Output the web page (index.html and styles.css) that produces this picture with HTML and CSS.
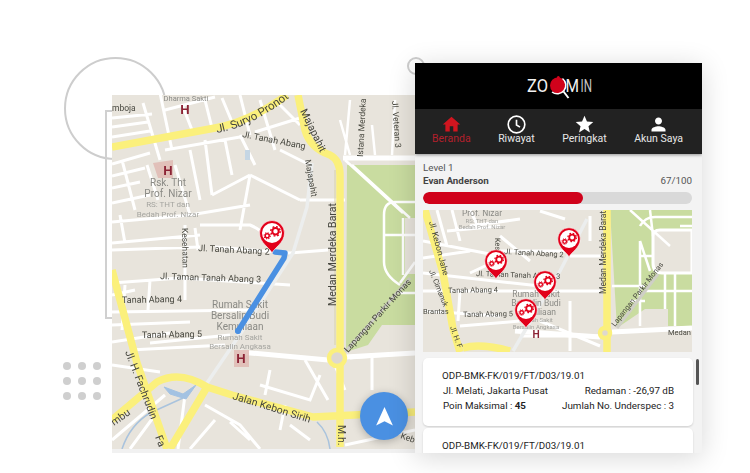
FILE: index.html
```html
<!DOCTYPE html>
<html lang="id">
<head>
<meta charset="utf-8">
<title>Zoomin</title>
<link rel="stylesheet" href="styles.css">
</head>
<body>
<div class="stage">
  <div class="deco-ring"></div>
  <div class="deco-frame"></div>
  <div class="deco-knob"></div>
  <div class="deco-dots"><i></i><i></i><i></i><i></i><i></i><i></i><i></i><i></i><i></i></div>

  <svg width="0" height="0" class="defs">
    <defs>
      <g id="pin">
        <path fill="#e2001a" stroke="#fff" stroke-width=".6" d="M0 20C-2 15-12.500 10-12.500 0A12.500 12.500 0 1 1 12.500 0C12.500 10 2 15 0 20Z"/>
        <circle r="10" fill="#fff"/>
        <circle cx="3.500" cy="-1.700" r="3.200" fill="none" stroke="#e2001a" stroke-width="2"/>
        <circle cx="3.500" cy="-1.700" r="4.700" fill="none" stroke="#e2001a" stroke-width="1.400" stroke-dasharray="1.850 1.840"/>
        <circle cx="-4.800" cy="2.800" r="2" fill="none" stroke="#e2001a" stroke-width="1.500"/>
        <circle cx="-4.800" cy="2.800" r="3.100" fill="none" stroke="#e2001a" stroke-width="1.100" stroke-dasharray="1.220 1.210"/>
      </g>
      <path id="suryo" d="M217 133Q252 127 290 97"/>
    </defs>
  </svg>

  <section class="map-wrap">
    <svg class="map-big" viewBox="112 95 303 354" width="303" height="354">
      <rect class="land" x="112" y="95" width="303" height="354"/>
      <path class="park" d="M347 165H415V325H382L368 345 346 352Z"/>
      <rect class="land" x="405" y="218" width="10" height="56"/>
      <rect class="land" x="405" y="325" width="10" height="30"/>
      <path class="street" d="M112 118L152 114M112 127L148 122M112 137L150 131M160 93L172 150M143 103L160 160M183 107L192 130M165 110L215 97M112 164L150 153M165 150L240 137M112 176L145 168M112 188L140 182M112 203L150 195M122 160L135 210M147 165L158 200M175 165L190 215M190 150L200 200M205 140L212 195M225 140L232 175M212 195L250 175M250 175L300 200M240 135L255 165M112 222L190 215M190 215L250 205M112 243L200 235M112 250L200 247M195 228L198 250M215 247L290 253M112 283L180 278M180 278L290 285M125 285L122 330M150 280L148 310M112 312L250 310M112 342L170 333M130 350L225 345M150 343L230 335M240 95L250 135M260 100L275 150M275 100L300 125M255 132L300 118M280 150L310 165M250 175L240 230M300 200L345 200M290 253L328 250M112 365L160 372M112 440L165 395M130 449L155 415M185 395L178 449M205 405L240 425L260 449M190 449L215 420M230 422L250 440M260 385L310 400L320 375M270 370L265 395M305 360L328 400M285 405L280 430M290 425L310 440M345 445L415 430M350 358L415 353M330 353L345 390M372 358L372 390M205 100L212 128M222 98L232 122M120 215L125 243M112 325L190 322M112 295L135 290M185 225V300M200 225H250Q262 230 270 240"/>
      <path class="street wide" d="M343 158H415M240 352L328 360M345 357L415 353"/>
      <path class="street thin" d="M350 100L345 155M372 125L375 155M395 100L392 155M340 120L350 155M352 165L410 218M345 160L403 213M384 215V262Q384 275 400 285M415 202H395Q384 202 384 215M384 235L415 235M403 218V275M400 293H415M400 283L415 262"/>
      <path class="alley" d="M207 383L243 330L293 253L307 207L312 163"/>
      <path class="alley2" d="M345 352L410 278"/>
      <path class="water" d="M183 398L150 413Q130 425 122 449M317 422Q328 432 330 449"/>
      <path class="water-blob" d="M164 387L183 394L196 385L186 399L170 394Z"/>
      <rect class="pond" x="245" y="150" width="5" height="10"/>
      <path class="block" d="M153 163L173 160V178H158Z"/>
      <rect class="block" x="234" y="350" width="15" height="17"/>
      <path class="major" d="M112 147L215 128Q250 122 287 95M298 95L305 130Q310 148 330 155Q340 160 340 175V447M112 270L137 363L167 449M170 449L207 387M112 420L157 382Q180 370 207 387L232 395L313 417L415 412"/>
      <circle class="round" cx="337" cy="358" r="8"/>
      <path class="majorline" d="M335 170V345"/>
      <text class="t t11"><textPath href="#suryo">Jl. Suryo Pronoto</textPath></text>
      <text class="t t10" transform="translate(300 111) rotate(64)">Majapahit</text>
      <text class="t t8" transform="translate(305 160) rotate(80)">Majapahit</text>
      <text class="t t9" transform="translate(242 137) rotate(11)">Jl. Tanah Abang</text>
      <text class="t t8" transform="translate(363 157) rotate(-87)">Istana Merdeka</text>
      <text class="t t8" transform="translate(392 101) rotate(86)">Jl. Veteran 3</text>
      <text class="t t10" transform="translate(336 306) rotate(-90)">Medan Merdeka Barat</text>
      <text class="t t8" transform="translate(182 228) rotate(89)">Kesehatan</text>
      <text class="t t8" x="112" y="111">mboja</text>
      <text class="t t85" transform="translate(198 251) rotate(3)">Jl. Tanah Abang 2</text>
      <text class="t t85" transform="translate(160 279) rotate(2)">Jl. Taman Tanah Abang 3</text>
      <text class="t t85" transform="translate(122 303) rotate(-1)">Tanah Abang 4</text>
      <text class="t t85" transform="translate(142 338) rotate(-1)">Tanah Abang 5</text>
      <text class="t t10" transform="translate(232 399) rotate(17)">Jalan Kebon Sirih</text>
      <text class="t t10" transform="translate(125 352) rotate(69)">Jl. H. Fachrudin</text>
      <text class="t t10" transform="translate(155 437) rotate(68)">Fa</text>
      <text class="t t10" transform="translate(114 426) rotate(-35)">mbu</text>
      <text class="t t85" transform="translate(348 353) rotate(-48)">Lapangan Parkir Monas</text>
      <text class="t t10" transform="translate(338 425) rotate(90)">M.h.</text>
      <text class="t t8" transform="translate(400 438) rotate(20)">Keb</text>
      <text class="g g75 mid" x="186" y="101">Dharma Sakti</text>
      <text class="h" x="185" y="114">H</text>
      <text class="h" x="168" y="175">H</text>
      <text class="h" x="241" y="363">H</text>
      <text class="g g9 mid" x="168" y="186">Rsk. Tht</text>
      <text class="g g9 mid" x="168" y="197">Prof. Nizar</text>
      <text class="g g7 mid" x="168" y="207">RS: THT dan</text>
      <text class="g g7 mid" x="168" y="217">Bedah Prof. Nizar</text>
      <text class="g g9 mid" x="240" y="308">Rumah Sakit</text>
      <text class="g g9 mid" x="240" y="319">Bersalin Budi</text>
      <text class="g g9 mid" x="240" y="330">Kemuliaan</text>
      <text class="g g7 mid" x="240" y="340">Rumah Sakit</text>
      <text class="g g7 mid" x="240" y="349">Bersalin Angkasa</text>
      <path class="route" d="M238 331L284 258L285 253L275 252"/>
      <circle class="route-dot" cx="238" cy="331" r="3"/>
      <use href="#pin" x="272" y="233"/>
    </svg>
    <button class="fab" type="button" aria-label="Navigasi">
      <svg viewBox="0 0 20 20" width="21" height="21"><path d="M10 1L18 18.500L10 14.500L2 18.500Z" fill="#fff"/></svg>
    </button>
  </section>

  <aside class="panel">
    <header class="brand">
      <svg class="logo" viewBox="0 0 66 24" width="66" height="24">
        <text x="1" y="16" textLength="21" lengthAdjust="spacingAndGlyphs">ZO</text>
        <circle cx="32" cy="9.500" r="8" fill="#d0021b"/>
        <path d="M31 2.500Q30 0 33 0Q35 2 34 5Z" fill="#d0021b"/>
        <path d="M36.500 2.500A8.500 8.500 0 0 1 26 16" fill="none" stroke="#fff" stroke-width="1.500"/>
        <path d="M37.500 15.500L42.500 22" stroke="#fff" stroke-width="2"/>
        <text x="39.500" y="16" textLength="13.500" lengthAdjust="spacingAndGlyphs">M</text>
        <text class="logo-dim" x="54.500" y="16" textLength="11.500" lengthAdjust="spacingAndGlyphs">IN</text>
      </svg>
    </header>
    <nav class="tabs">
      <a class="tab active"><svg viewBox="0 0 24 24" width="21" height="21"><path d="M10 20v-6h4v6h5v-8h3L12 3 2 12h3v8z"/></svg><span>Beranda</span></a>
      <a class="tab"><svg viewBox="0 0 24 24" width="21" height="21"><circle cx="12" cy="12" r="9.500" class="clock"/><path d="M12 6.500V12.500L16 15" class="clock"/></svg><span>Riwayat</span></a>
      <a class="tab"><svg viewBox="0 0 24 24" width="21" height="21"><path d="M12 17.270L18.180 21l-1.640-7.030L22 9.240l-7.190-.61L12 2 9.190 8.630 2 9.240l5.460 4.730L5.820 21z"/></svg><span>Peringkat</span></a>
      <a class="tab"><svg viewBox="0 0 24 24" width="21" height="21"><path d="M12 12c2.210 0 4-1.790 4-4s-1.790-4-4-4-4 1.790-4 4 1.790 4 4 4zm0 2c-2.670 0-8 1.340-8 4v2h16v-2c0-2.660-5.330-4-8-4z"/></svg><span>Akun Saya</span></a>
    </nav>
    <div class="content">
      <div class="level">Level 1</div>
      <div class="who"><b>Evan Anderson</b><span>67/100</span></div>
      <div class="bar"><div class="fill" style="width:59.500%"></div></div>

      <svg class="map-small" viewBox="423 209 269 142" width="269" height="142">
        <rect class="land" x="423" y="209" width="269" height="142"/>
        <path class="park" d="M610 209H692V325H668V308H645L617 327Z"/>
        <path class="landf" d="M653 235Q653 229 660 229H692V272H662Q653 272 653 262Z"/>
        <path class="street" d="M437 209L447 245M452 209L460 240M470 209L478 225M470 225L520 218M447 230L500 225M423 240L500 255M423 257L470 250M500 235L530 260M500 250H570M423 272L540 285M470 272L500 258M423 290L600 290M460 290L458 320M425 310L500 315M460 325L520 320M540 320L600 345M520 335L600 335M600 255H570M540 210L565 218M570 300V350M590 215V240"/>
        <path class="street wide" d="M515 330L600 336M612 331L692 327"/>
        <path class="street thin" d="M630 209L670 245M650 209L653 235M640 240V325M650 270L640 240M640 225Q645 216 655 216H692M692 225H680M640 255H653M612 285L645 285M665 272V308M675 272V325M645 290H692M630 300L645 300"/>
        <path class="alley" d="M513 350L560 270L587 218"/>
        <path class="alley2" d="M617 327L658 273"/>
        <path class="major" d="M425 209L443 272L453 328L460 351M463 347Q480 342 510 350M607 209V351"/>
        <circle class="round" cx="605" cy="332" r="5"/>
        <text class="t t8" transform="translate(429 221) rotate(75)">Jl. Kebon Jahe</text>
        <text class="t t7" transform="translate(504 253) rotate(3)">Jl. Tanah Abang 2</text>
        <text class="t t7" transform="translate(476 275) rotate(2)">Jl. Taman Tanah Abang 3</text>
        <text class="t t7" transform="translate(448 292) rotate(-1)">Tanah Abang 4</text>
        <text class="t t7" transform="translate(463 316) rotate(-1)">Tanah Abang 5</text>
        <text class="t t7" x="423" y="313">Brantas</text>
        <text class="t t7" transform="translate(429 270) rotate(68)">Jl. Cimanuk</text>
        <text class="t t7" transform="translate(450 326) rotate(70)">Jl. H. F</text>
        <text class="t t7" transform="translate(495 237) rotate(88)">Kesehatan</text>
        <text class="t t8" transform="translate(606 293) rotate(-90)">Medan Merdeka Barat</text>
        <text class="t t7" transform="translate(615 326) rotate(-52)">Lapangan Parkir Monas</text>
        <text class="t t7" x="668" y="334">Medan M</text>
        <text class="g g8 mid" x="482" y="215">Prof. Nizar</text>
        <text class="g g6 mid" x="482" y="221.500">RS: THT dan</text>
        <text class="g g6 mid" x="482" y="228">Bedah Prof. Nizar</text>
        <text class="g g8 mid" x="536" y="296">Rumah Sakit</text>
        <text class="g g8 mid" x="536" y="305">Bersalin Budi</text>
        <text class="g g8 mid" x="536" y="314">Kemuliaan</text>
        <text class="g g6 mid" x="536" y="321">Rumah Sakit</text>
        <text class="g g6 mid" x="536" y="328">Bersalin Angkasa</text>
        <text class="h small" x="536" y="337">H</text>
        <use href="#pin" transform="translate(569 238) scale(.9)"/>
        <use href="#pin" transform="translate(496 260) scale(.9)"/>
        <use href="#pin" transform="translate(545 281) scale(.9)"/>
        <use href="#pin" transform="translate(526 309) scale(.9)"/>
      </svg>

      <div class="list">
        <article class="card">
          <div class="code">ODP-BMK-FK/019/FT/D03/19.01</div>
          <div class="row"><span>Jl. Melati, Jakarta Pusat</span><span>Redaman : -26,97 dB</span></div>
          <div class="row"><span>Poin Maksimal : <b>45</b></span><span>Jumlah No. Underspec : 3</span></div>
        </article>
        <article class="card">
          <div class="code">ODP-BMK-FK/019/FT/D03/19.01</div>
        </article>
      </div>
      <div class="scroll-thumb"></div>
    </div>
  </aside>
</div>
</body>
</html>
```

FILE: styles.css
```css
* { box-sizing: border-box; }
html, body { margin: 0; background: #fff; }
body { font-family: Roboto, "Liberation Sans", sans-serif; }

.stage {
  position: relative;
  width: 750px;
  height: 473px;
  overflow: hidden;
  display: flex;
  align-items: flex-start;
  padding: 63px 0 0 112px;
}
.defs { position: absolute; }

.deco-ring {
  position: absolute; left: 64px; top: 57px;
  width: 103px; height: 103px;
  border: 2px solid #cdcdcd; border-radius: 50%;
}
.deco-frame {
  position: absolute; left: 105px; top: 110px;
  width: 20px; height: 209px;
  border: 2px solid #d0d0d0; border-right: 0;
}
.deco-knob {
  position: absolute; left: 407px; top: 57px;
  width: 18px; height: 18px;
  border: 2px solid #cdcdcd; border-radius: 50%;
}
.deco-dots {
  position: absolute; left: 63px; top: 362px;
  display: grid; grid-template-columns: repeat(3, 8px); gap: 7px;
}
.deco-dots i { width: 8px; height: 8px; border-radius: 50%; background: #cfcfcf; }

.map-wrap {
  position: relative;
  flex: none;
  width: 303px; height: 358px;
  margin-top: 32px;
  background: #f1f1f1;
}
.map-big, .map-small { display: block; filter: blur(.4px); }

.land { fill: #e8e4dc; }
.landf { fill: #e8e4dc; stroke: #fff; stroke-width: 3; }
.park { fill: #c9dca0; }
.street { fill: none; stroke: #fff; stroke-width: 3; }
.street.wide { stroke-width: 5; }
.street.thin { stroke-width: 2.500; }
.alley { fill: none; stroke: #eceeee; stroke-width: 3.500; }
.alley2 { fill: none; stroke: #cfcfc6; stroke-width: 3; }
.water { fill: none; stroke: #a9c3dd; stroke-width: 1.500; }
.water-blob { fill: #a3c2e2; stroke: #a3c2e2; stroke-width: 1; }
.pond { fill: #c5d6e4; }
.block { fill: #dfb7b0; opacity: .8; }
.major { fill: none; stroke: #fbf07c; stroke-width: 7.500; stroke-linejoin: round; }
.majorline { fill: none; stroke: #d8d2a8; stroke-width: 1; }
.round { fill: #ded8cf; stroke: #fbf07c; stroke-width: 4.500; }

.t { fill: #47473f; font-family: Roboto, "Liberation Sans", sans-serif; }
.t11 { font-size: 11.500px; }
.t10 { font-size: 10.500px; }
.t9 { font-size: 9px; }
.t85 { font-size: 9px; }
.t8 { font-size: 8.500px; }
.t7 { font-size: 7.500px; }
.g { fill: #8a8a85; font-family: Roboto, "Liberation Sans", sans-serif; }
.g9 { font-size: 10px; }
.g8 { font-size: 8.500px; }
.g75 { font-size: 7.500px; }
.g7 { font-size: 8px; fill: #a5a5a0; }
.g6 { font-size: 6px; fill: #a5a5a0; }
.mid { text-anchor: middle; }
.h { fill: #8c2335; font: bold 13px "Liberation Sans", sans-serif; text-anchor: middle; }
.h.small { font-size: 10px; }

.route { fill: none; stroke: #4a90e2; stroke-width: 5.500; stroke-linejoin: round; stroke-linecap: round; }
.route-dot { fill: #4a90e2; }

.fab {
  position: absolute; left: 248px; top: 297px;
  width: 48px; height: 48px;
  border: 0; border-radius: 50%; padding: 0;
  background: #4a90e2;
  box-shadow: 0 2px 8px rgba(0, 0, 0, .25);
  display: flex; align-items: center; justify-content: center;
}

.panel {
  position: relative;
  flex: none;
  width: 287px; height: 390px;
  background: #f3f3f3;
  box-shadow: 0 4px 26px rgba(0, 0, 0, .16);
  overflow: hidden;
}
.brand {
  height: 46px; background: #000;
  display: flex; align-items: center; justify-content: center;
}
.logo {
  display: block; margin-top: 3px;
  fill: #f2f2f2; font-size: 19px; font-weight: 400;
  font-family: Roboto, "Liberation Sans", sans-serif;
}
.logo-dim { fill: #c4c4c4; }

.tabs {
  height: 45px; background: #222;
  display: flex; justify-content: space-between; align-items: flex-start;
  padding: 5px 19px 0 17px;
  box-shadow: 0 1px 3px rgba(0, 0, 0, .4);
  position: relative;
}
.tab {
  display: flex; flex-direction: column; align-items: center;
  color: #e8e8e8; font-size: 10.500px; line-height: 14px;
}
.tab svg { fill: #fff; display: block; margin-bottom: -3px; }
.tab .clock { fill: none; stroke: #fff; stroke-width: 1.900; }
.tab.active { color: #b3202c; }
.tab.active svg { fill: #d0151f; }

.content { position: relative; padding: 7px 0 0 8px; }
.level { font-size: 9.800px; line-height: 13px; color: #555; }
.who {
  width: 269px;
  display: flex; justify-content: space-between;
  font-size: 9.800px; line-height: 13px; color: #555;
}
.who b { color: #444; }
.bar {
  width: 269px; height: 12px; margin-top: 5px;
  background: #d9d9d9; border-radius: 6px; overflow: hidden;
}
.fill { height: 100%; background: #d0021b; border-radius: 6px; }
.map-small { margin-top: 6px; }

.list { margin-top: 6px; display: flex; flex-direction: column; gap: 2px; }
.card {
  width: 270px; height: 68px;
  background: #fff; border-radius: 5px;
  box-shadow: 0 1px 2px rgba(0, 0, 0, .15);
  padding: 10px 19px;
  color: #222; font-size: 9.800px; line-height: 15px;
}
.row { display: flex; justify-content: space-between; padding-left: 1px; }
.row b { color: #222; }
.scroll-thumb {
  position: absolute; left: 281px; top: 205px;
  width: 3px; height: 26px; border-radius: 2px; background: #555;
}
```
